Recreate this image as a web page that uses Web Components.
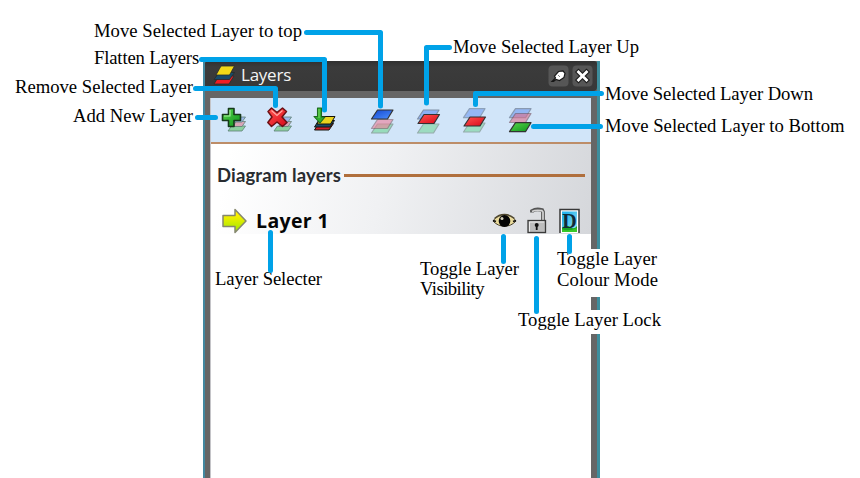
<!DOCTYPE html>
<html lang="en"><head><meta charset="utf-8"><title>Layers panel</title>
<style>html,body{margin:0;background:#fff;overflow:hidden}</style></head>
<body><layers-guide></layers-guide>
<script>
const define=(name,html,ready)=>customElements.define(name,class extends HTMLElement{
  connectedCallback(){
    if(this.shadowRoot)return;
    const t=document.createElement('template');t.innerHTML=html;
    this.attachShadow({mode:'open'}).append(t.content.cloneNode(true));
    if(ready)ready(this,this.shadowRoot);
  }
});

// Text whose tracking is adjusted so that it spans a given width.
define('fit-text',`<style>:host{display:block;white-space:pre;line-height:1}span{display:inline-block}</style><span><slot></slot></span>`,(el,root)=>{
  const s=root.querySelector('span'),w=+el.getAttribute('w');
  s.style.letterSpacing=((w-s.getBoundingClientRect().width)/el.textContent.length)+'px';
});

// Callout label, placed freely over the panel by its left edge and baseline.
define('callout-label',`<style>:host{position:absolute;font:18.67px/18px "Liberation Serif",serif;color:#000}</style><slot></slot>`,el=>{
  el.style.left=el.getAttribute('x')+'px';el.style.top=(+el.getAttribute('base')-15)+'px';
  const f=document.createElement('fit-text');f.setAttribute('w',el.getAttribute('w'));f.textContent=el.getAttribute('text');el.append(f);
});

const sheet=(y,fill,edge,o=1,x=0)=>`<path d="M${7.5+x} ${y}H${23+x}L${17.5+x} ${y+9}H${1.5+x}Z" fill="${fill}" stroke="${edge}" stroke-width="1.2" stroke-linejoin="round" opacity="${o}"/>`;
const blue='url(#b)',red='url(#r)',green='url(#g)',dark='#333';
const miniStack=`<g stroke="#5f8276" stroke-width=".8"><path d="M7 24l3.500-5h14L21 24z" fill="#8bd0a0"/><path d="M12 19.500l3-5h9.500l-3.500 5z" fill="#d9a5b8"/><path d="M13 15l3-5h8.500l-3.500 5z" fill="#9db8ec"/></g>`;
const icons={
 add:[26,26,miniStack+`<path d="M7.500 1.500h5.500v6h6.500v6h-6.500v6H7.500v-6H1.500v-6h6z" fill="url(#g)" stroke="#16391b" stroke-width="1.600" stroke-linejoin="round"/><path d="M9 3v6H3" fill="none" stroke="#a9efa0" stroke-width="1.100"/>`],
 remove:[26,26,miniStack+`<path d="M4.500 1L10 5.500 15.500 1 19.500 4.500 15 10l5 5.500-4.500 4L10 15l-5.500 4.500L.8 15.500 5 10 1 4.500z" fill="url(#r)" stroke="#6c1115" stroke-width="1.500" stroke-linejoin="round"/><path d="M4.500 3.500L10 8.500l5.500-5" fill="none" stroke="#ffaaa6" stroke-width="1.200"/>`],
 flatten:[26,26,`<g stroke="#16140c" stroke-width="1" stroke-linejoin="round"><path d="M1.500 23l4-6.500H20.500l-4.500 6.500z" fill="#d01f28"/><path d="M1.500 20l4-6.500h16L17 20z" fill="#174968"/><path d="M4 17l4.500-7.500h13.500L17.500 17z" fill="#ead21d"/></g><path d="M4.500 1h4v9h3.500L7 16 1 9.500h3.500z" fill="#2fae2d" stroke="#1c6a1e" stroke-width="1.100" stroke-linejoin="round"/><path d="M6 2v9" stroke="#7edc62"/>`],
 top:[26,26,sheet(15,'#79d69b','#71887a',.65)+sheet(10.500,'#ee7f99','#835f6a',.6)+sheet(1,blue,dark)],
 up:[26,26,sheet(15,'#79d69b','#71887a',.6)+sheet(1,'#6795f2','#56657d',.65)+sheet(5.500,red,dark,1,.5)],
 down:[26,26,sheet(14,'#79d69b','#71887a',.6)+sheet(-.3,'#7da5f3','#7186a0',.7)+sheet(8,red,dark,1,.5)],
 bottom:[26,26,sheet(-.3,'#729def','#63738b',.65)+sheet(4.500,'#dd6d8a','#76505e',.6)+sheet(13.700,green,dark)],
 logo:[21,20,`<g stroke="#272b2b" stroke-width=".8"><path d="M0 19l5-8h15l-5 8z" fill="#f01e23"/><path d="M0 14.500l5-7h15.500l-5 7z" fill="#174b6b"/><path d="M2 10l5-9h13.500l-5 9z" fill="#f2d818"/></g>`],
 pin:[21,22,`<rect x=".5" y=".5" width="20" height="21" rx="4" fill="#565656"/><path d="M4 16.500l3.500-3.500-1-2 4-4.500 4.500-.5 2 2.500-1 4-4.500 3-3.500-1-2.500 2z" fill="#fff" stroke="#161616" stroke-width="1.200"/><path d="M10 10l2 2" stroke="#888"/>`],
 close:[21,22,`<rect x=".5" y=".5" width="20" height="21" rx="4" fill="#565656"/><path d="M6.500 7l8 8m0-8l-8 8" stroke="#1c1c1c" stroke-width="5" stroke-linecap="square"/><path d="M6.500 7l8 8m0-8l-8 8" stroke="#fff" stroke-width="2.800" stroke-linecap="square"/>`],
 arrow:[26,26,`<path d="M1 7.500h12V1.500L24 13 13 24.500v-6H1z" fill="url(#y)" stroke="#85876f" stroke-width="1.500" stroke-linejoin="round"/>`],
 eye:[25,18,`<path d="M1 9C7 1 18 1 24 9 18 16 7 16 1 9z" fill="#eadb9c" stroke="#4a432c" stroke-width="1"/><path d="M2.500 6.500C8 1 17 1 22.500 6.500" fill="none" stroke="#4d452c" stroke-width="1.200"/><ellipse cx="12.500" cy="9" rx="5.800" ry="6" fill="#050505"/><circle cx="10" cy="6.500" r="1.500" fill="#d7d3bd"/><path d="M1 8.500l3 1m20-1l-3 1" stroke="#111" stroke-width="1.800"/>`],
 lock:[20,26,`<path d="M5 4.500V3Q9 .5 15 2L16 4v8" fill="none" stroke="#555" stroke-width="3.800"/><path d="M5 3.500Q9 1.500 15 2.700L16 4v8" fill="none" stroke="#d4d4d4" stroke-width="1.700"/><rect x="1" y="12.500" width="17.500" height="12" fill="#bdbdbd" stroke="#3a3a3a" stroke-width="1.300"/><path d="M2.500 23.500V14H17" fill="none" stroke="#ededed"/><circle cx="9.700" cy="17" r="2" fill="#111"/><path d="M9.700 17v5" stroke="#111" stroke-width="1.800"/>`],
 mode:[21,26,`<path d="M1 25V1.500h19V25" fill="#fff" stroke="#383838" stroke-width="1.500"/><rect x="3" y="3.500" width="15" height="20.500" fill="url(#sky)"/><path d="M3 20q4-4 8-1t7-1v6H3z" fill="#1ba324"/><path d="M3 21q5 3 15-1v4H3z" fill="#39c729"/><text x="10.500" y="19.500" text-anchor="middle" font-family="Liberation Serif,serif" font-weight="bold" font-size="20" fill="#102a38">D</text>`]
};
define('ui-icon',`<style>:host{display:block;flex:none}svg{display:block;overflow:visible}</style>`,(el,root)=>{
  const [w,h,p]=icons[el.getAttribute('name')];
  const grad=(id,a,b,x=1)=>`<linearGradient id="${id}" x2="${x}" y2="1"><stop offset=".2" stop-color="${a}"/><stop offset="1" stop-color="${b}"/></linearGradient>`;
  root.innerHTML+=`<svg width="${w}" height="${h}" viewBox="0 0 ${w} ${h}" fill="none"><defs>${grad('b','#1f55da','#4c91ff')+grad('r','#fa4545','#d70818')+grad('g','#4bc843','#0b941a')+grad('y','#fff000','#9be800',0)+grad('sky','#27b4ee','#a3e8ef')}</defs>${p}</svg>`;
});

define('panel-title',`<style>:host{display:flex;box-sizing:border-box;height:30px;padding:0 3px 0 9px;align-items:center;background:linear-gradient(#303030,#3b3b3b 20%,#383838);color:#f4f4f4;border-radius:3px 3px 4px 4px;font:17px "Open Sans",sans-serif}
fit-text{margin:-3px auto 0 6px}ui-icon[name=logo]{margin-top:-2px}.buttons{display:flex;gap:3px;margin:-1px 1px 0 0}</style><ui-icon name="logo"></ui-icon><fit-text w="50">Layers</fit-text><div class="buttons"><ui-icon name="pin"></ui-icon><ui-icon name="close"></ui-icon></div>`);
define('layer-toolbar',`<style>:host{display:grid;box-sizing:border-box;height:46px;grid-template-columns:46px 46px 57px 46px 46px 46px 46px;padding:9px 0 0 10px;background:#d1e5f9;border-bottom:2px solid #bd8d68;overflow:hidden}.stack{margin-top:2px}</style>
<ui-icon name="add"></ui-icon><ui-icon name="remove"></ui-icon><ui-icon name="flatten"></ui-icon><ui-icon class="stack" name="top"></ui-icon><ui-icon class="stack" name="up"></ui-icon><ui-icon class="stack" name="down"></ui-icon><ui-icon class="stack" name="bottom"></ui-icon>`);
define('layer-list',`<style>:host{display:flex;flex-direction:column;box-sizing:border-box;height:90px;background:linear-gradient(102deg,#fff 5%,#f0f1f3 45%,#d5d7db);font-family:"Open Sans",sans-serif;font-weight:bold;color:#292c30}
.heading{display:flex;align-items:center;height:21px;padding:21px 6px 0;gap:3px;font:bold 18.5px Lato,sans-serif}.heading i{flex:1;height:3px;background:#b06f3c}
.row{display:flex;align-items:center;height:26px;padding:22px 11px 0 11px}.name{margin-left:8px;font-size:19.5px;color:#050505}.eye{margin-left:auto}.lock{margin-left:10px}.mode{margin-left:12px}</style>
<div class="heading"><fit-text w="124">Diagram layers</fit-text><i></i></div>
<div class="row"><ui-icon name="arrow"></ui-icon><fit-text class="name" w="73">Layer 1</fit-text><ui-icon class="eye" name="eye"></ui-icon><ui-icon class="lock" name="lock"></ui-icon><ui-icon class="mode" name="mode"></ui-icon></div>`);
define('layers-panel',`<style>:host{display:block;box-sizing:border-box;width:397px;height:417px;border-left:2px solid #4288a0;border-right:3px solid #3d8e9d;background:#666}
.body{margin:7px 6px 0 5px;height:380px;background:#fff;border-left:1px solid #c4c4c8}</style><panel-title></panel-title><div class="body"><layer-toolbar></layer-toolbar><layer-list></layer-list></div>`);

define('layers-guide',`<style>:host{display:block;position:relative;box-sizing:border-box;width:860px;height:478px;padding:61px 0 0 203px;overflow:hidden;background:#fff}
.gap{position:absolute;background:#fff;left:557px;width:104px}.lines{position:absolute;left:0;top:0}</style>
<layers-panel></layers-panel><div class="gap" style="top:249px;height:48px"></div><div class="gap" style="top:310px;height:24px"></div>
<callout-label x="94" base="37" w="208" text="Move Selected Layer to top"></callout-label>
<callout-label x="94" base="64" w="105" text="Flatten Layers"></callout-label>
<callout-label x="15" base="93" w="178" text="Remove Selected Layer"></callout-label>
<callout-label x="73" base="122" w="120" text="Add New Layer"></callout-label>
<callout-label x="453" base="53" w="186" text="Move Selected Layer Up"></callout-label>
<callout-label x="605" base="100" w="208" text="Move Selected Layer Down"></callout-label>
<callout-label x="605" base="132" w="239.500" text="Move Selected Layer to Bottom"></callout-label>
<callout-label x="215" base="285" w="107" text="Layer Selecter"></callout-label>
<callout-label x="420" base="275" w="99" text="Toggle Layer"></callout-label>
<callout-label x="420" base="295" w="64" text="Visibility"></callout-label>
<callout-label x="557" base="265" w="100" text="Toggle Layer"></callout-label>
<callout-label x="557" base="286" w="101" text="Colour Mode"></callout-label>
<callout-label x="518" base="326" w="143" text="Toggle Layer Lock"></callout-label>
<svg class="lines" width="860" height="478" fill="none" stroke="#00a2e8" stroke-width="5" stroke-linecap="round" stroke-linejoin="round"><path d="M306.500 32.500H380.500V106M201.500 59.500H324.500V110M195.500 88.500H275.500V105.500M197.500 117.500H215.500M449.500 47.500H426.500V103M601.500 93.500H475.500V104.500M533.500 126.500H600.500M270.500 232.500V270.500M503.500 236.500V261.500M536.500 238.500V311.500M569.500 236.500V251.500"/></svg>`);
</script></body></html>
